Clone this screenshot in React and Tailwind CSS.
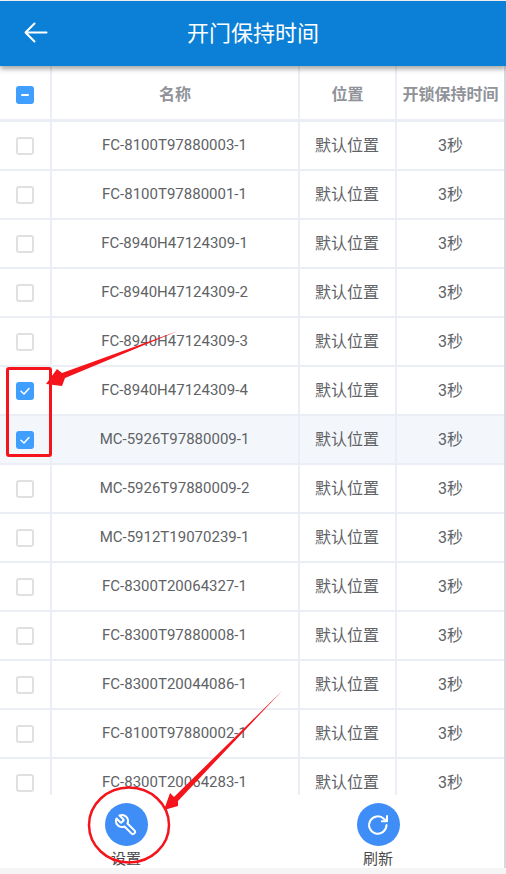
import React from 'react'

const ROWS = [
  { name: 'FC-8100T97880003-1' },
  { name: 'FC-8100T97880001-1' },
  { name: 'FC-8940H47124309-1' },
  { name: 'FC-8940H47124309-2' },
  { name: 'FC-8940H47124309-3' },
  { name: 'FC-8940H47124309-4', checked: true },
  { name: 'MC-5926T97880009-1', checked: true, active: true },
  { name: 'MC-5926T97880009-2' },
  { name: 'MC-5912T19070239-1' },
  { name: 'FC-8300T20064327-1' },
  { name: 'FC-8300T97880008-1' },
  { name: 'FC-8300T20044086-1' },
  { name: 'FC-8100T97880002-1' },
  { name: 'FC-8300T20064283-1' },
]

function Checkbox({ state }) {
  if (state === 'some') {
    return (
      <span className="w-[18px] h-[18px] rounded-[3px] bg-[#409eff] flex items-center justify-center">
        <span className="w-[8px] h-[2px] bg-white rounded-sm" />
      </span>
    )
  }
  if (state === 'on') {
    return (
      <span className="w-[18px] h-[18px] rounded-[3px] bg-[#409eff] flex items-center justify-center">
        <svg width="12" height="12" viewBox="0 0 12 12" fill="none" stroke="white" strokeWidth="1.5" strokeLinecap="round" strokeLinejoin="round">
          <path d="M2 6.2 L5 9 L10 3.5" />
        </svg>
      </span>
    )
  }
  return <span className="w-[18px] h-[18px] rounded-[3px] bg-white border-2 border-[#dfe0e2]" />
}

function Row({ row }) {
  return (
    <div className={`grid grid-cols-[52px_248px_97px_1fr] h-[49px] shrink-0 border-b-2 border-[#ebeef5] text-[#606266] ${row.active ? 'bg-[#f3f7fb]' : 'bg-white'}`}>
      <div className="flex items-center justify-center border-r-2 border-[#ebeef5] pr-[1px]">
        <Checkbox state={row.checked ? 'on' : 'off'} />
      </div>
      <div className="flex items-center justify-center border-r-2 border-[#ebeef5] text-[15px] pr-[1px]">{row.name}</div>
      <div className="flex items-center justify-center border-r-2 border-[#ebeef5] text-[16px] pr-[1px]">默认位置</div>
      <div className="flex items-center justify-center text-[16px]">3秒</div>
    </div>
  )
}

function ActionButton({ label, children }) {
  return (
    <div className="flex flex-col items-center pt-[8px]">
      <div className="w-[43px] h-[43px] rounded-full bg-[#3f8ef7] flex items-center justify-center">{children}</div>
      <div className="text-[15px] leading-[20px] mt-[3px] text-[#4a4a4a]">{label}</div>
    </div>
  )
}

export default function App() {
  return (
    <div className="relative w-[506px] h-[874px] overflow-hidden bg-[#f5f5f5] flex flex-col font-['Roboto','Noto_Sans_CJK_SC',sans-serif]">
      {/* Header */}
      <header className="relative z-10 mt-[1px] h-[65px] shrink-0 bg-[#0b80d6] shadow-[0_3px_5px_rgba(0,0,0,0.35)] flex items-center justify-center">
        <svg className="absolute left-[24px] top-[20px]" width="24" height="24" viewBox="0 0 24 24" fill="none" stroke="white" strokeWidth="2" strokeLinecap="round" strokeLinejoin="round">
          <path d="M1.5 11.5 H22.5 M10.5 2.5 L1.5 11.5 L10.5 20.5" />
        </svg>
        <h1 className="text-[22px] text-white font-normal">开门保持时间</h1>
      </header>

      {/* Table */}
      <div className="flex-1 min-h-0 overflow-hidden bg-white flex flex-col border-r-2 border-[#d5d8dc]">
        <div className="grid grid-cols-[52px_248px_97px_1fr] h-[56px] shrink-0 border-b-[3px] border-[#ebeef5] text-[#909399] font-bold text-[16px]">
          <div className="flex items-center justify-center border-r-2 border-[#ebeef5] pr-[1px] pt-[5px]">
            <Checkbox state="some" />
          </div>
          <div className="flex items-center justify-center border-r-2 border-[#ebeef5] pt-[5px]">名称</div>
          <div className="flex items-center justify-center border-r-2 border-[#ebeef5] pt-[5px]">位置</div>
          <div className="flex items-center justify-center pt-[5px] whitespace-nowrap">开锁保持时间</div>
        </div>
        {ROWS.map((row) => (
          <Row key={row.name} row={row} />
        ))}
      </div>

      {/* Bottom actions */}
      <footer className="h-[73px] shrink-0 mb-[6px] bg-white grid grid-cols-2 border-r-2 border-[#d5d8dc]">
        <ActionButton label="设置">
          <svg width="24" height="24" viewBox="0 0 24 24" fill="none" stroke="white" strokeWidth="2" strokeLinecap="round" strokeLinejoin="round">
            <path d="M14.7 6.3a1 1 0 0 0 0 1.4l1.6 1.6a1 1 0 0 0 1.4 0l3.77-3.77a6 6 0 0 1-7.94 7.94l-6.91 6.91a2.12 2.12 0 0 1-3-3l6.91-6.91a6 6 0 0 1 7.94-7.94l-3.76 3.76z" transform="matrix(-1 0 0 1 24 0)" />
          </svg>
        </ActionButton>
        <ActionButton label="刷新">
          <svg width="24" height="24" viewBox="0 0 24 24" fill="none" stroke="white" strokeWidth="2" strokeLinecap="round" strokeLinejoin="round">
            <path d="M20.5 12a8.7 8.7 0 1 1-2.6-6.2L20.5 8" />
            <path d="M21 3v5.2h-5.2" />
          </svg>
        </ActionButton>
      </footer>

      {/* Red annotations drawn on top of the screenshot */}
      <div className="absolute left-[6px] top-[367px] w-[46px] h-[90px] border-[3px] border-[#f5141c] rounded-[3px]" />
      <svg className="absolute left-0 top-0 pointer-events-none" width="506" height="874" viewBox="0 0 506 874" fill="none">
        <polygon points="178,331 65,378 62,386 46,384 57,369 62,373" fill="#f5141c" />
        <polygon points="282,691 178,801 178,806 164,810 170,793 174,797" fill="#f5141c" />
        <ellipse cx="129" cy="825" rx="40" ry="37.5" stroke="#f5141c" strokeWidth="2.5" />
      </svg>
    </div>
  )
}
